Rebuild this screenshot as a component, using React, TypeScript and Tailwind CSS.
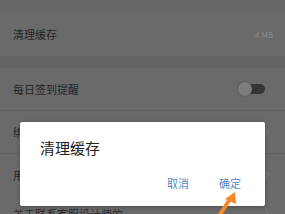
import { ChevronRight } from "lucide-react";

const font = { fontFamily: '"Noto Sans CJK SC", "Noto Sans", sans-serif' };

function Row({ label, children }: { label: string; children?: React.ReactNode }) {
  return (
    <div className="flex h-[42px] items-center justify-between bg-[#6a6a6a] pl-[13px] pr-[12px]">
      <span className="text-[11px] text-[#262626]">{label}</span>
      {children}
    </div>
  );
}

export default function App() {
  return (
    <div className="relative h-[214px] w-[285px] overflow-hidden bg-[#656565]" style={font}>
      {/* settings list (dimmed) */}
      <div className="h-[13px] bg-[#676767]" />
      <div className="flex h-[43px] items-center justify-between bg-[#6a6a6a] pl-[13px] pr-[12px]">
        <span className="text-[11px] text-[#262626]">清理缓存</span>
        <span className="text-[8px] text-[#8c8c8c]">4 MB</span>
      </div>
      <div className="h-[12px] bg-[#646464]" />
      <Row label="每日签到提醒">
        <div className="relative mr-[8px] h-[14px] w-[27px]">
          <div className="absolute right-0 top-[2px] h-[10px] w-[22px] rounded-full bg-[#363636]" />
          <div className="absolute left-0 top-0 h-[14px] w-[14px] rounded-full bg-[#7c7c7c] shadow-[0_0_2px_rgba(0,0,0,0.35)]" />
        </div>
      </Row>
      <div className="h-px bg-[#606060]" />
      <Row label="绑定手机号">
        <ChevronRight size={12} strokeWidth={1.5} className="text-[#8a8a8a]" />
      </Row>
      <div className="h-px bg-[#606060]" />
      <Row label="用户协议">
        <ChevronRight size={12} strokeWidth={1.5} className="text-[#8a8a8a]" />
      </Row>
      <div className="h-px bg-[#606060]" />
      <div className="-mt-[4px]">
        <Row label="关于联系客服设计师的">
          <ChevronRight size={12} strokeWidth={1.5} className="text-[#8a8a8a]" />
        </Row>
      </div>

      {/* dialog */}
      <div className="absolute left-[20px] top-[122px] flex h-[84px] w-[245px] flex-col rounded-[2px] bg-white shadow-[0_1px_4px_rgba(0,0,0,0.3)]">
        <div className="pl-[20px] pt-[15px] text-[15px] leading-[22px] text-[#222]">清理缓存</div>
        <div className="mt-auto flex justify-end gap-[30px] pb-[16px] pr-[24px] text-[11px] leading-[14px] text-[#4f8cc9]">
          <span>取消</span>
          <span>确定</span>
        </div>
      </div>

      {/* orange arrow */}
      <svg className="absolute left-0 top-0" width="285" height="214" viewBox="0 0 285 214">
        <line x1="219" y1="216" x2="230" y2="199" stroke="#f08a2c" strokeWidth="4" strokeLinecap="round" />
        <polygon points="235,192 236,204 225,199" fill="#f08a2c" />
      </svg>
    </div>
  );
}
